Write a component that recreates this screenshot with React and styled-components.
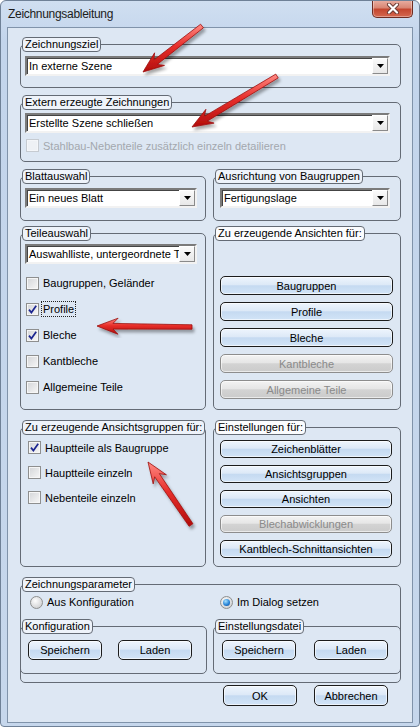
import React from "react";
import styled, { createGlobalStyle } from "styled-components";

const GlobalStyle = createGlobalStyle`
  html, body { margin: 0; padding: 0; background: #ffffff; }
  body {
    font-family: "Liberation Sans", Arial, sans-serif;
    font-size: 11px;
    color: #000;
  }
  * { box-sizing: border-box; }
`;

// tail -> tip, returns polygon points for a barbed arrow
function arrowPoints(x1, y1, x2, y2) {
    const dx = x2 - x1, dy = y2 - y1;
    const len = Math.hypot(dx, dy);
    const ux = dx / len, uy = dy / len;
    const nx = -uy, ny = ux;
    const hl = 21, hw = 8, sw = 2.8, back = 5;
    const bx = x2 - ux * hl, by = y2 - uy * hl;
    const jx = x2 - ux * (hl - back), jy = y2 - uy * (hl - back);
    const pts = [
        [x1 + nx * sw * 0.8, y1 + ny * sw * 0.8],
        [jx + nx * sw, jy + ny * sw],
        [bx + nx * hw, by + ny * hw],
        [x2, y2],
        [bx - nx * hw, by - ny * hw],
        [jx - nx * sw, jy - ny * sw],
        [x1 - nx * sw * 0.8, y1 - ny * sw * 0.8],
    ];
    return pts.map(p => p[0].toFixed(1) + "," + p[1].toFixed(1)).join(" ");
}

const arrows = [
    [202, 26, 143, 72],
    [277, 76, 192, 127],
    [192, 327, 97, 326],
    [191, 525, 148, 462],
];

function Check({ checked, disabled }) {
    return (
        <Box $disabled={disabled}>
            {checked && (
                <svg width="9" height="9" viewBox="0 0 9 9">
                    <path d="M1 4.6 L3.4 7.6 L8.2 0.8" stroke="#1b2590" strokeWidth="1.7" fill="none" />
                </svg>
            )}
        </Box>
    );
}

function Combo({ value }) {
    return (
        <ComboBox>
            <ComboText>{value}</ComboText>
            <DropBtn>
                <svg width="7" height="4" viewBox="0 0 7 4">
                    <polygon points="0,0 7,0 3.5,4" fill="#000" />
                </svg>
            </DropBtn>
        </ComboBox>
    );
}

export default function App() {
    return (
        <>
            <GlobalStyle />
            <Window>
                <TitleBar>
                    <Title>Zeichnungsableitung</Title>
                    <CloseBtn>
                        <svg width="14" height="11" viewBox="0 0 14 11">
                            <path d="M3 1.5 L11 9.5 M11 1.5 L3 9.5" stroke="#6b3a33" strokeWidth="4" strokeLinecap="round" />
                            <path d="M3 1.5 L11 9.5 M11 1.5 L3 9.5" stroke="#ffffff" strokeWidth="2.2" strokeLinecap="round" />
                        </svg>
                    </CloseBtn>
                </TitleBar>

                <Client>
                    <Group>
                        <Legend>Zeichnungsziel</Legend>
                        <Body $pad="4px 10px 11px 4px">
                            <Combo value="In externe Szene" />
                        </Body>
                    </Group>

                    <Group $mt={7}>
                        <Legend>Extern erzeugte Zeichnungen</Legend>
                        <Body $pad="3px 10px 9px 4px">
                            <Combo value="Erstellte Szene schließen" />
                            <CheckRow $h={13} $mt={6} $disabled>
                                <Check disabled />
                                <span>Stahlbau-Nebenteile zusätzlich einzeln detailieren</span>
                            </CheckRow>
                        </Body>
                    </Group>

                    <TwoCols $mt={7}>
                        <Group>
                            <Legend>Blattauswahl</Legend>
                            <Body $pad="4px 8px 12px 4px">
                                <Combo value="Ein neues Blatt" />
                            </Body>
                        </Group>
                        <Group>
                            <Legend>Ausrichtung von Baugruppen</Legend>
                            <Body $pad="4px 10px 12px 6px">
                                <Combo value="Fertigungslage" />
                            </Body>
                        </Group>
                    </TwoCols>

                    <TwoCols $mt={5}>
                        <Group>
                            <Legend>Teileauswahl</Legend>
                            <Body $pad="3px 8px 9px 4px">
                                <Combo value="Auswahlliste, untergeordnete T" />
                                <CheckList $mt={6}>
                                    <CheckRow $h={26} $ml={1}><Check /><span>Baugruppen, Geländer</span></CheckRow>
                                    <CheckRow $h={26} $ml={1}><Check checked /><Focus>Profile</Focus></CheckRow>
                                    <CheckRow $h={26} $ml={1}><Check checked /><span>Bleche</span></CheckRow>
                                    <CheckRow $h={26} $ml={1}><Check /><span>Kantbleche</span></CheckRow>
                                    <CheckRow $h={26} $ml={1}><Check /><span>Allgemeine Teile</span></CheckRow>
                                </CheckList>
                            </Body>
                        </Group>
                        <Group>
                            <Legend $light>Zu erzeugende Ansichten für:</Legend>
                            <ButtonStack $pad="35px 7px 9px 6px" $gap={7}>
                                <Btn $h={19}>Baugruppen</Btn>
                                <Btn $h={19}>Profile</Btn>
                                <Btn $h={19}>Bleche</Btn>
                                <Btn $h={19} $disabled>Kantbleche</Btn>
                                <Btn $h={19} $disabled>Allgemeine Teile</Btn>
                            </ButtonStack>
                        </Group>
                    </TwoCols>

                    <TwoCols $mt={10}>
                        <Group>
                            <Legend>Zu erzeugende Ansichtsgruppen für:</Legend>
                            <Body $pad="0 8px 0 4px">
                                <CheckRow $h={25} $ml={3}><Check checked /><span>Hauptteile als Baugruppe</span></CheckRow>
                                <CheckRow $h={25} $ml={3}><Check /><span>Hauptteile einzeln</span></CheckRow>
                                <CheckRow $h={25} $ml={3}><Check /><span>Nebenteile einzeln</span></CheckRow>
                            </Body>
                        </Group>
                        <Group>
                            <Legend $light>Einstellungen für:</Legend>
                            <ButtonStack $pad="5px 8px 8px 6px" $gap={7}>
                                <Btn $h={18}>Zeichenblätter</Btn>
                                <Btn $h={18}>Ansichtsgruppen</Btn>
                                <Btn $h={18}>Ansichten</Btn>
                                <Btn $h={18} $disabled>Blechabwicklungen</Btn>
                                <Btn $h={18}>Kantblech-Schnittansichten</Btn>
                            </ButtonStack>
                        </Group>
                    </TwoCols>

                    <Group $mt={10}>
                        <Legend>Zeichnungsparameter</Legend>
                        <Body $pad="0 0 8px 0">
                            <RadioRow>
                                <RadioLabel $w={190}><Radio />Aus Konfiguration</RadioLabel>
                                <RadioLabel><Radio $on />Im Dialog setzen</RadioLabel>
                            </RadioRow>
                            <SubCols>
                                <Group>
                                    <Legend>Konfiguration</Legend>
                                    <BtnRow $pad="6px 0 13px 7px" $gap={16}>
                                        <Btn $h={20} $w={74}>Speichern</Btn>
                                        <Btn $h={20} $w={74}>Laden</Btn>
                                    </BtnRow>
                                </Group>
                                <Group>
                                    <Legend>Einstellungsdatei</Legend>
                                    <BtnRow $pad="6px 0 13px 8px" $gap={18}>
                                        <Btn $h={20} $w={74}>Speichern</Btn>
                                        <Btn $h={20} $w={74}>Laden</Btn>
                                    </BtnRow>
                                </Group>
                            </SubCols>
                        </Body>
                    </Group>

                    <Footer>
                        <Btn $h={21} $w={74}>OK</Btn>
                        <Btn $h={21} $w={74}>Abbrechen</Btn>
                    </Footer>
                </Client>

                <ArrowLayer width="420" height="727" viewBox="0 0 420 727">
                    <defs>
                        <linearGradient id="arrowFill" x1="0" y1="0" x2="0" y2="1">
                            <stop offset="0%" stopColor="#ff8a84" />
                            <stop offset="45%" stopColor="#e8302c" />
                            <stop offset="100%" stopColor="#b30d0b" />
                        </linearGradient>
                        <filter id="arrowShadow" x="-20%" y="-20%" width="140%" height="140%">
                            <feDropShadow dx="2" dy="3" stdDeviation="1.6" floodColor="#000" floodOpacity="0.35" />
                        </filter>
                    </defs>
                    {arrows.map((a, i) => (
                        <polygon
                            key={i}
                            points={arrowPoints(...a)}
                            fill="url(#arrowFill)"
                            stroke="#9c0f0c"
                            strokeWidth="0.8"
                            strokeLinejoin="round"
                            filter="url(#arrowShadow)"
                        />
                    ))}
                </ArrowLayer>
            </Window>
        </>
    );
}

const Window = styled.div`
    position: relative;
    width: 420px;
    height: 727px;
    display: flex;
    flex-direction: column;
    background: linear-gradient(#d0dff1, #c3d5ec 40px, #c6d7ec);
    border: 1px solid #6f8197;
    border-radius: 6px 6px 4px 4px;
    overflow: hidden;
`;

const TitleBar = styled.div`
    height: 26px;
    flex: none;
    display: flex;
    align-items: flex-start;
`;

const Title = styled.div`
    padding: 6px 0 0 7px;
    font-size: 12px;
    letter-spacing: -0.3px;
    color: #1c1c1c;
`;

const CloseBtn = styled.div`
    margin: -1px 6px 0 auto;
    width: 41px;
    height: 18px;
    display: flex;
    align-items: center;
    justify-content: center;
    border: 1px solid #6e2c22;
    border-top: none;
    border-radius: 0 0 5px 5px;
    background: linear-gradient(#eab0a4, #d98674 45%, #c4462f 55%, #d4684f);
    box-shadow: inset 0 0 0 1px rgba(255, 255, 255, 0.35);
`;

const Client = styled.div`
    flex: 1;
    margin: 0 6px 3px 6px;
    padding: 9px 11px 0 12px;
    border: 1px solid #8093aa;
    background: #dde7f3;
    display: flex;
    flex-direction: column;
`;

const Group = styled.fieldset`
    margin: ${p => p.$mt || 0}px 0 0 0;
    padding: 0;
    min-width: 0;
    border: 1px solid #646b75;
    border-radius: 5px;
`;

const Legend = styled.legend`
    margin-left: 1px;
    padding: 0 2px;
    border: 1px solid #646b75;
    border-radius: 4px;
    background: ${p => (p.$light ? "#fbfcfe" : "#eef3fa")};
    line-height: 13px;
    font-size: 11px;
    white-space: nowrap;
`;

const Body = styled.div`
    padding: ${p => p.$pad};
`;

const TwoCols = styled.div`
    margin-top: ${p => p.$mt || 0}px;
    display: grid;
    grid-template-columns: 186px 1fr;
    column-gap: 7px;
    align-items: stretch;
`;

const SubCols = styled.div`
    margin: 7px -1px 0 -1px;
    display: grid;
    grid-template-columns: 187px 1fr;
    column-gap: 6px;
`;

const ComboBox = styled.div`
    height: 20px;
    display: flex;
    align-items: center;
    padding-left: 1px;
    background: #ffffff;
    border: 2px solid;
    border-color: #7b7b7b #f2f2f2 #f2f2f2 #7b7b7b;
    box-shadow: inset 1px 1px 0 #444;
    overflow: hidden;
`;

const ComboText = styled.div`
    flex: 1;
    min-width: 0;
    white-space: nowrap;
    overflow: hidden;
    padding-left: 1px;
`;

const DropBtn = styled.div`
    flex: none;
    width: 16px;
    height: 16px;
    display: flex;
    align-items: center;
    justify-content: center;
    background: linear-gradient(#fafafa, #e8e8e8);
    border: 1px solid;
    border-color: #ffffff #8a8a8a #8a8a8a #ffffff;
`;

const CheckList = styled.div`
    margin-top: ${p => p.$mt || 0}px;
`;

const CheckRow = styled.div`
    height: ${p => p.$h}px;
    margin-top: ${p => p.$mt || 0}px;
    padding-left: ${p => p.$ml || 1}px;
    display: flex;
    align-items: center;
    gap: 4px;
    color: ${p => (p.$disabled ? "#a3a8ae" : "#000")};
    white-space: nowrap;
`;

const Box = styled.span`
    flex: none;
    width: 13px;
    height: 13px;
    display: flex;
    align-items: center;
    justify-content: center;
    border: 1px solid ${p => (p.$disabled ? "#c6cbd1" : "#8e8f8f")};
    background: ${p => (p.$disabled ? "#eef1f5" : "linear-gradient(135deg, #d3d5d8, #f7f7f7)")};
    box-shadow: inset 0 0 0 1px ${p => (p.$disabled ? "#f4f6f9" : "#f6f6f6")};
`;

const Focus = styled.span`
    outline: 1px dotted #222;
    outline-offset: 1px;
`;

const ButtonStack = styled.div`
    padding: ${p => p.$pad};
    display: flex;
    flex-direction: column;
    gap: ${p => p.$gap}px;
`;

const BtnRow = styled.div`
    padding: ${p => p.$pad};
    display: flex;
    gap: ${p => p.$gap}px;
`;

const Btn = styled.div`
    height: ${p => p.$h}px;
    width: ${p => (p.$w ? p.$w + "px" : "auto")};
    flex: none;
    display: flex;
    align-items: center;
    justify-content: center;
    border: 1px solid ${p => (p.$disabled ? "#8d8d8d" : "#1c1c1c")};
    border-radius: 5px;
    color: ${p => (p.$disabled ? "#8a8a8a" : "#000")};
    background: ${p =>
        p.$disabled
            ? "linear-gradient(#f3f3f3, #e6e6e6 45%, #d3d3d3 52%, #cbcbcb)"
            : "linear-gradient(#eef5fd, #dde9f7 45%, #c5daf1 52%, #d2e4f7)"};
    box-shadow: inset 0 0 0 1px rgba(255, 255, 255, 0.6);
    white-space: nowrap;
`;

const RadioRow = styled.div`
    height: 20px;
    padding-left: 9px;
    display: flex;
    align-items: center;
`;

const RadioLabel = styled.div`
    width: ${p => (p.$w ? p.$w + "px" : "auto")};
    display: flex;
    align-items: center;
    gap: 4px;
`;

const Radio = styled.span`
    flex: none;
    width: 13px;
    height: 13px;
    border-radius: 50%;
    border: 1px solid #8e8f8f;
    background: radial-gradient(circle at 40% 35%, #fdfdfd, #d2d3d5 75%);
    display: flex;
    align-items: center;
    justify-content: center;

    &::after {
        content: "";
        display: ${p => (p.$on ? "block" : "none")};
        width: 7px;
        height: 7px;
        border-radius: 50%;
        background: radial-gradient(circle at 38% 32%, #a8e2ff, #2a86d8 55%, #0c3f8c);
    }
`;

const Footer = styled.div`
    margin-top: 2px;
    padding-right: 13px;
    display: flex;
    justify-content: flex-end;
    gap: 17px;
`;

const ArrowLayer = styled.svg`
    position: absolute;
    left: -1px;
    top: -1px;
    pointer-events: none;
`;
